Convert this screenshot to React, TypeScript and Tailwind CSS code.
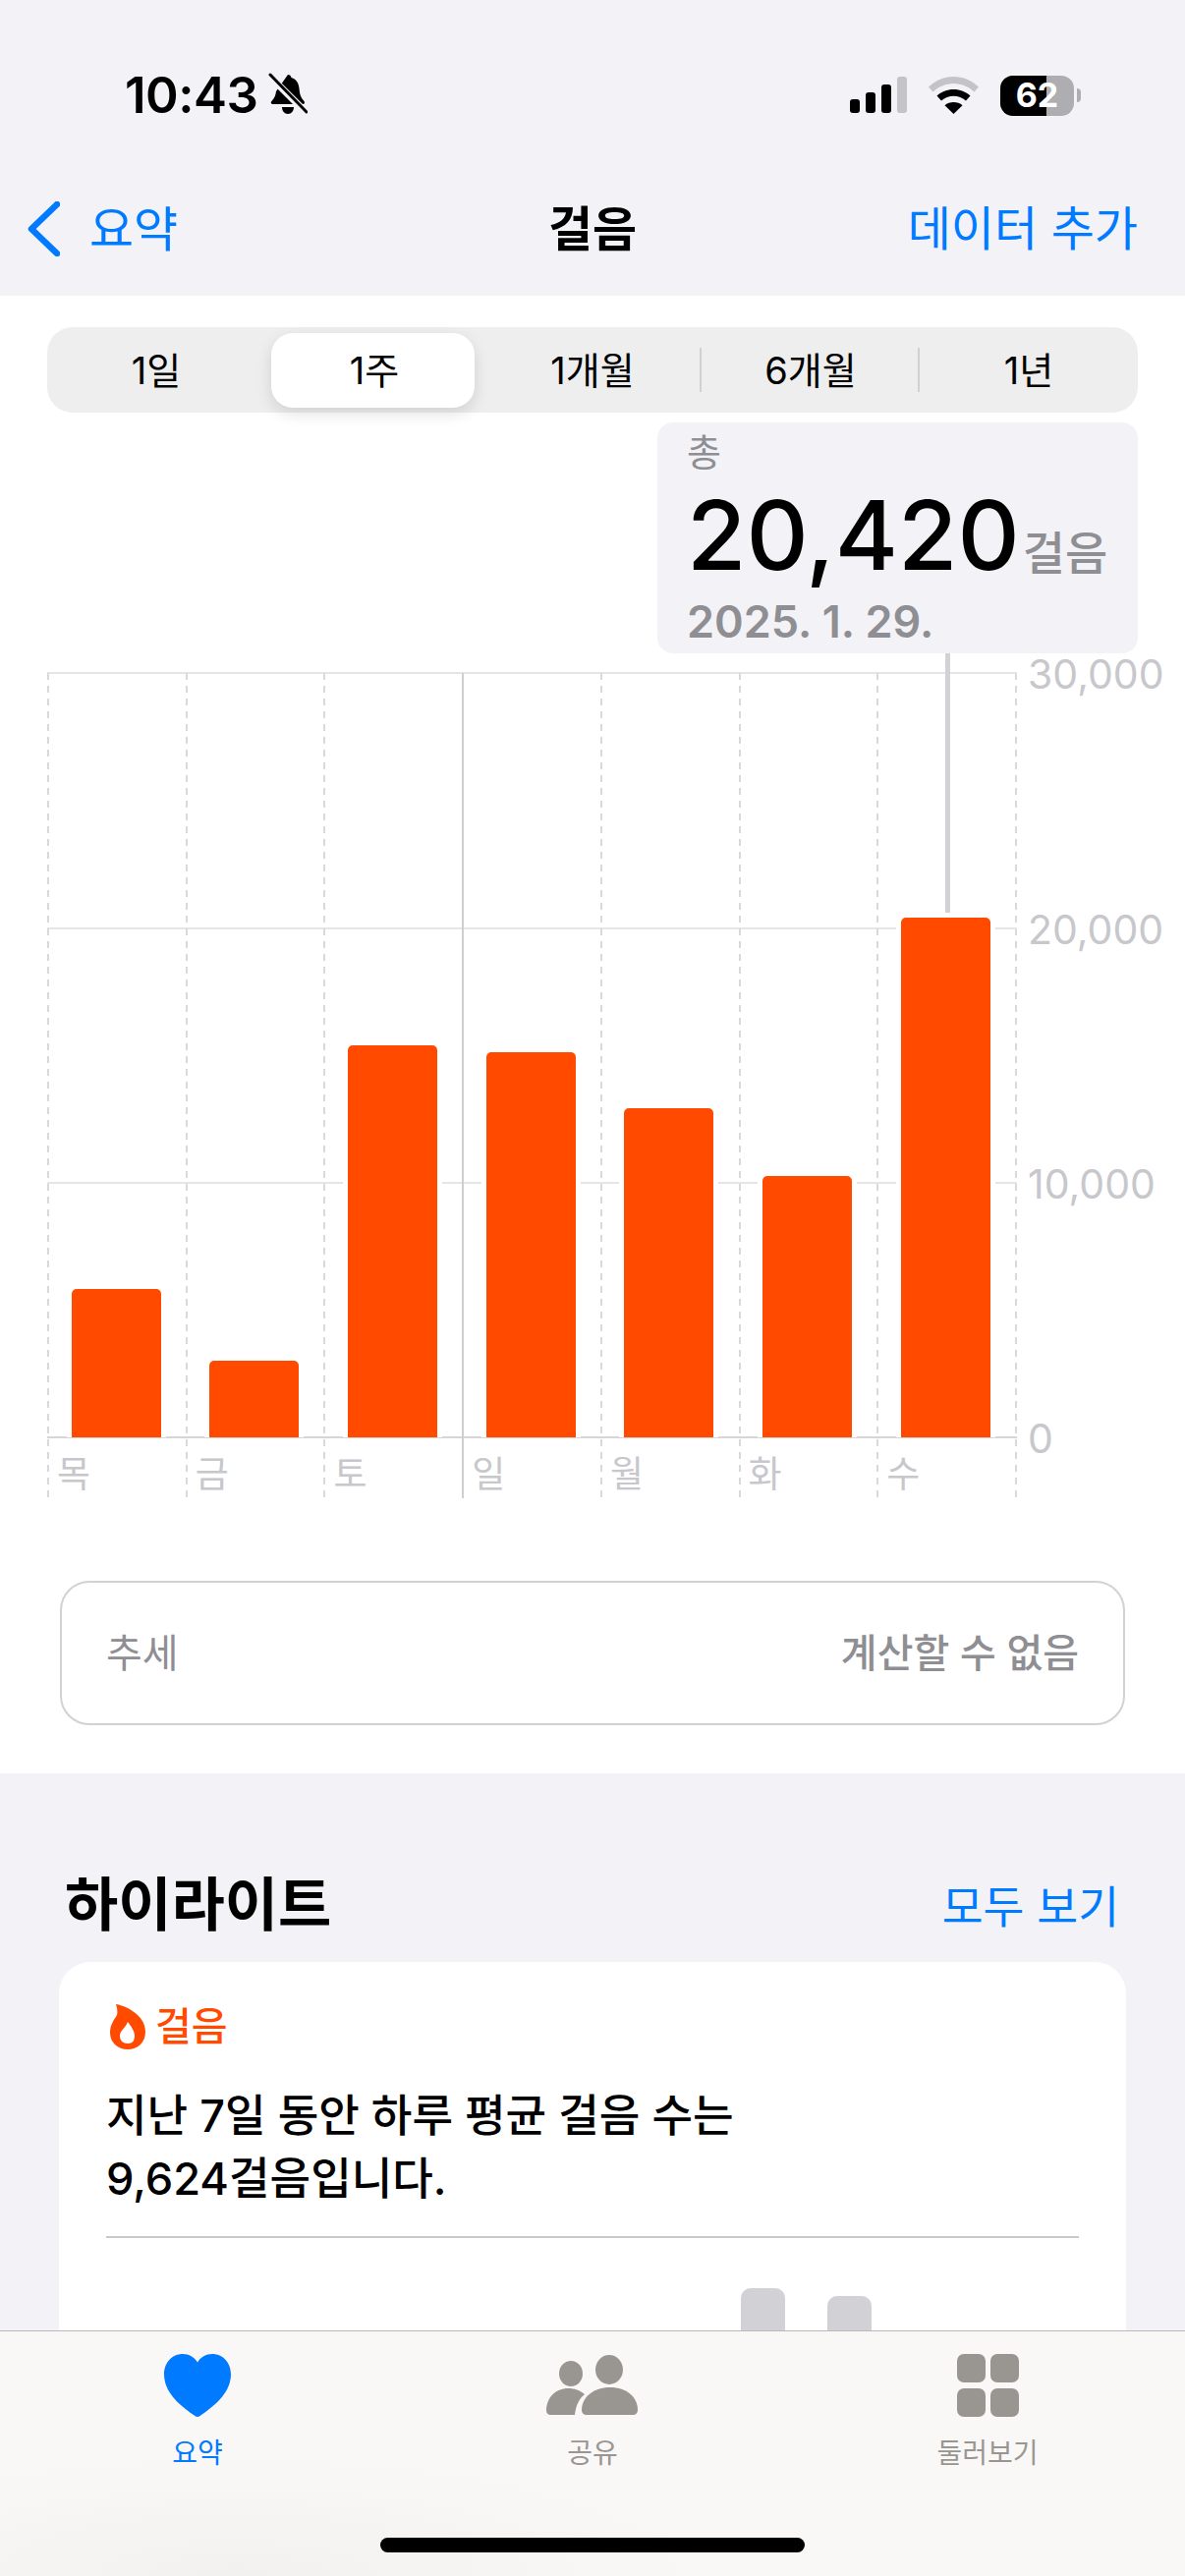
import React from 'react';

const ranges = ['1일', '1주', '1개월', '6개월', '1년'];

const days = [
  { label: '목', top: 1312 },
  { label: '금', top: 1385 },
  { label: '토', top: 1064 },
  { label: '일', top: 1071 },
  { label: '월', top: 1128 },
  { label: '화', top: 1197 },
  { label: '수', top: 934 },
];

const axis = [
  { label: '30,000', y: 0, color: 'bg-[#e5e5e8]' },
  { label: '20,000', y: 260, color: 'bg-[#e5e5e8]' },
  { label: '10,000', y: 519, color: 'bg-[#e5e5e8]' },
  { label: '0', y: 778, color: 'bg-[#d6d6d9]' },
];

const dashed =
  'bg-[repeating-linear-gradient(to_bottom,#d9d9dc_0,#d9d9dc_7px,transparent_7px,transparent_13px)]';

const StatusBar: React.FC = () => (
  <div className="h-[196px] pt-[72px] pl-[127px] pr-[106px] flex items-start justify-between">
    <div className="flex items-center h-[48px]">
      <span className="text-[51px] leading-none font-semibold text-black tracking-[-0.5px]">10:43</span>
      <svg className="ml-[11px]" width="40" height="44" viewBox="0 0 40 44">
        <path d="M20 2c2 0 3 1 3.500 3 5 1.500 7.500 5.500 8 11 .5 6 1.500 9 5 13 1 1.500.5 3-1.500 3H5c-2 0-3-1.500-1.500-3 3-3.500 4-6 4.500-10L20 2z" fill="#000" />
        <path d="M14 35h12c0 4-2.500 7-6 7s-6-3-6-7z" fill="#000" />
        <path d="M1 3l37 37" stroke="#f2f2f7" strokeWidth="7" />
        <path d="M2 2l37 38" stroke="#000" strokeWidth="3" strokeLinecap="round" />
      </svg>
    </div>
    <div className="flex items-center h-[48px] pt-[2px]">
      <svg width="58" height="38" viewBox="0 0 58 38">
        <rect x="0" y="23" width="10" height="14" rx="3" fill="#000" />
        <rect x="16" y="16" width="10" height="21" rx="3" fill="#000" />
        <rect x="32" y="8" width="10" height="29" rx="3" fill="#000" />
        <rect x="48" y="0" width="10" height="37" rx="3" fill="#c4c4c8" />
      </svg>
      <svg className="ml-[22px]" width="51" height="38" viewBox="0 0 51 38">
        <path d="M25.500 0C35 0 44 4 51 10.500l-4.500 5C41 10.500 33.500 7 25.500 7S10 10.500 4.500 15.500L0 10.500C7 4 16 0 25.500 0z" fill="#c4c4c8" />
        <path d="M25.500 13c6.500 0 12.500 2.500 17 6.500l-4.500 5c-3.500-3-8-4.800-12.500-4.800S16.500 21.500 13 24.500l-4.500-5C13 15.500 19 13 25.500 13z" fill="#000" />
        <path d="M25.500 26c3.500 0 6.500 1.200 9 3.200L25.500 38l-9-8.800c2.500-2 5.500-3.200 9-3.200z" fill="#000" />
      </svg>
      <div className="ml-[22px] relative w-[75px] h-[41px] rounded-[13px] overflow-hidden bg-[#aeaeb2]">
        <div className="w-[47px] h-full bg-black" />
        <span className="absolute inset-0 flex items-center justify-center text-[34px] font-bold text-white leading-none">62</span>
      </div>
      <div className="ml-[3px] w-[4px] h-[14px] rounded-r-full bg-[#aeaeb2]" />
    </div>
  </div>
);

const Header: React.FC = () => (
  <div className="bg-[#f2f2f7]">
    <StatusBar />
    <div className="h-[74px] mb-[31px] grid grid-cols-3 items-center">
      <div className="pl-[28px] flex items-center">
        <svg width="33" height="56" viewBox="0 0 33 56">
          <path d="M30 3L4 28l26 25" fill="none" stroke="#007aff" strokeWidth="6.500" strokeLinecap="round" strokeLinejoin="round" />
        </svg>
        <span className="ml-[30px] text-[49px] leading-none text-[#007aff]">요약</span>
      </div>
      <span className="justify-self-center text-[49px] leading-none font-semibold text-black">걸음</span>
      <span className="justify-self-end pr-[48px] text-[48px] leading-none text-[#007aff]">데이터 추가</span>
    </div>
  </div>
);

const RangePicker: React.FC = () => (
  <div className="mx-[48px] h-[87px] rounded-[26px] bg-[#eeeeef] grid grid-cols-5 items-center">
    {ranges.map((range, i) => (
      <div key={range} className="relative h-full flex items-center justify-center">
        {i === 1 && (
          <div className="absolute top-[6px] bottom-[5px] left-[6px] right-[9px] rounded-[22px] bg-white shadow-[0_6px_16px_rgba(0,0,0,0.12)]" />
        )}
        <span className="relative text-[38px] leading-none text-black">{range}</span>
        {i >= 2 && i < 4 && <div className="absolute right-0 top-[21px] h-[45px] w-[2px] bg-[#d1d1d4]" />}
      </div>
    ))}
  </div>
);

const Tooltip: React.FC = () => (
  <div className="self-end mr-[48px] mt-[10px] w-[489px] h-[235px] rounded-[16px] bg-[#f2f2f7] pl-[30px] pt-[11px] flex flex-col">
    <span className="text-[38px] leading-[38px] text-[#8e8e93]">총</span>
    <div className="flex items-baseline mt-[20px]">
      <span className="text-[98px] leading-[92px] font-medium text-black">20,420</span>
      <span className="ml-[3px] text-[47px] leading-none font-medium text-[#8e8e93]">걸음</span>
    </div>
    <span className="mt-[19px] text-[45px] leading-none font-semibold text-[#8e8e93]">2025. 1. 29.</span>
  </div>
);

const StepChart: React.FC = () => (
  <div className="relative mt-[20px] mx-[48px] h-[840px]">
    {axis.map(line => (
      <div key={line.label}>
        <div className={`absolute left-0 w-[987px] h-[2px] ${line.color}`} style={{ top: line.y - 1 }} />
        <span
          className="absolute left-[998px] text-[41px] leading-[40px] text-[#c7c7cc]"
          style={{ top: line.y - 19 }}
        >
          {line.label}
        </span>
      </div>
    ))}
    <div className="flex w-[987px] h-full">
      {days.map((day, i) => (
        <div key={day.label} className="relative w-[141px] h-full">
          <div
            className={i === 3 ? 'absolute left-0 top-0 bottom-0 w-[2px] bg-[#cfcfd3]' : `absolute left-0 top-0 bottom-0 w-[2px] ${dashed}`}
          />
          <div className="h-[778px] flex items-end pl-[19.500px]">
            <div className="relative bg-white px-[5px] pt-[5px]">
              <div
                className="w-[91px] rounded-t-[5px] bg-[#ff4a00]"
                style={{ height: 1463 - day.top }}
              />
            </div>
          </div>
          <span className="absolute left-[10px] top-[796px] text-[37px] leading-[40px] text-[#c7c7cc]">{day.label}</span>
        </div>
      ))}
      <div className={`w-[2px] h-full ${dashed}`} />
    </div>
    <div className="absolute left-[914px] top-[-20px] w-[5px] h-[264px] bg-[#d1d1d6]" />
  </div>
);

const TabBar: React.FC = () => (
  <div className="absolute left-0 right-0 bottom-0 h-[250px] border-t-[1.500px] border-[#b9b9bb] bg-[#faf8f7] bg-[radial-gradient(ellipse_at_20%_100%,#f2f1f0_0%,transparent_35%)]">
    <div className="grid grid-cols-3 pt-[23px]">
      <div className="flex flex-col items-center">
        <svg width="68" height="64" viewBox="0 0 68 64">
          <path d="M34 64c-1.500 0-2.500-1-4-2C14 51 0 38 0 20.500 0 8.500 8.500 0 19 0c6.500 0 11.500 3 15 8.500C37.500 3 42.500 0 49 0c10.500 0 19 8.500 19 20.500C68 38 54 51 38 62c-1.500 1-2.500 2-4 2z" fill="#007aff" />
        </svg>
        <span className="mt-[21px] text-[28px] leading-[32px] text-[#007aff]">요약</span>
      </div>
      <div className="flex flex-col items-center">
        <svg className="mr-[2px]" width="93" height="64" viewBox="0 0 93 64">
          <ellipse cx="25" cy="20" rx="12" ry="13" fill="#999692" />
          <ellipse cx="64" cy="16" rx="14" ry="15" fill="#999692" />
          <path d="M0 58c0-14 10-23 22-23 7 0 12 2 17 6-5 4-9 11-10 21H4c-2 0-4-2-4-4z" fill="#999692" />
          <path d="M36 57c0-13 12-23 29-23s28 10 28 23c0 3-2 5-5 5H41c-3 0-5-2-5-5z" fill="#999692" />
        </svg>
        <span className="mt-[21px] text-[28px] leading-[32px] text-[#999692]">공유</span>
      </div>
      <div className="flex flex-col items-center">
        <div className="grid grid-cols-2 gap-x-[5px] gap-y-[5px] h-[64px]">
          <div className="w-[29px] h-[29px] rounded-[7px] bg-[#999692]" />
          <div className="w-[29px] h-[29px] rounded-[7px] bg-[#999692]" />
          <div className="w-[29px] h-[29px] rounded-[7px] bg-[#999692]" />
          <div className="w-[29px] h-[29px] rounded-[7px] bg-[#999692]" />
        </div>
        <span className="mt-[21px] text-[28px] leading-[32px] text-[#999692]">둘러보기</span>
      </div>
    </div>
    <div className="absolute left-[387px] top-[210px] w-[432px] h-[15px] rounded-full bg-black" />
  </div>
);

const App: React.FC = () => (
  <div className="relative w-[1206px] h-[2622px] overflow-hidden bg-[#f2f2f7] font-['Inter','Noto_Sans_CJK_KR',sans-serif]">
    <Header />

    <div className="bg-white pt-[32px] pb-[49px] flex flex-col">
      <RangePicker />
      <Tooltip />
      <StepChart />
      <div className="mt-[84px] mx-[61px] h-[147px] rounded-[30px] border-[2.500px] border-[#d1d1d6] flex items-center justify-between px-[45px]">
        <span className="text-[40px] leading-none text-[#8e8e93]">추세</span>
        <span className="text-[40px] leading-none font-medium text-[#8e8e93]">계산할 수 없음</span>
      </div>
    </div>

    <div className="mt-[107px] pl-[66px] pr-[67px] flex items-center justify-between h-[54px]">
      <h2 className="mb-[2px] text-[59px] leading-none font-bold text-black">하이라이트</h2>
      <span className="mt-[6px] text-[45.500px] leading-none text-[#007aff]">모두 보기</span>
    </div>

    <div className="mt-[31px] mx-[60px] rounded-[32px] bg-white pt-[43px] px-[48px] h-[500px]">
      <div className="flex items-center">
        <svg className="ml-[4px]" width="36" height="46" viewBox="0 0 36 46">
          <path
            fillRule="evenodd"
            d="M6 0c8 1 30 10 30 28 0 11-8 18-18 18S0 39 0 29c0-8 4-13 7-18 1-3 0-8-1-11zM18 40c-6 0-8-4-8-8 0-5 5-7 8-14 3 4 7 9 7 14 0 5-2 8-7 8z"
            fill="#ff4a00"
          />
        </svg>
        <span className="ml-[10px] text-[40px] leading-none font-medium text-[#ff4a00]">걸음</span>
      </div>
      <p className="mt-[36px] text-[45.200px] leading-[64px] font-medium text-black">
        지난 7일 동안 하루 평균 걸음 수는
        <br />
        9,624걸음입니다.
      </p>
      <div className="mt-[26px] h-[1.500px] bg-[#c9c9cc]" />
      <div className="mt-[51px] pl-[646px] flex items-start gap-[43px]">
        <div className="w-[45px] h-[100px] rounded-[10px] bg-[#d1d1d6]" />
        <div className="mt-[8px] w-[45px] h-[100px] rounded-[10px] bg-[#d1d1d6]" />
      </div>
    </div>

    <TabBar />
  </div>
);

export default App;
